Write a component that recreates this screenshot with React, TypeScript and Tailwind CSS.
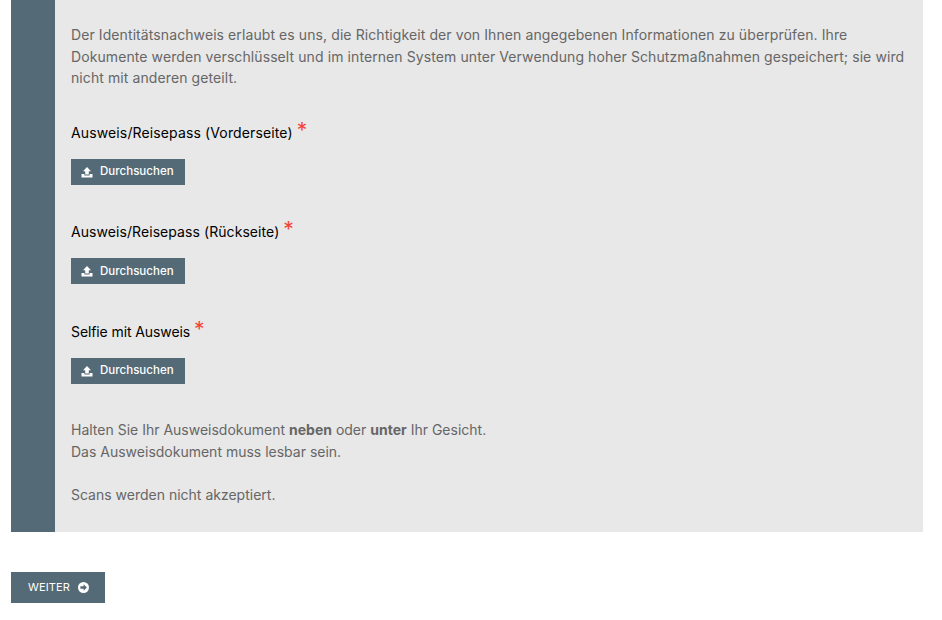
const font = { fontFamily: "Inter, 'Noto Sans', sans-serif" };

function UploadIcon() {
  return (
    <svg width="12" height="11" viewBox="0 0 12 11" className="shrink-0" aria-hidden>
      <path d="M6 0 L10 4.2 H7.8 V7.5 H4.2 V4.2 H2 Z" fill="#fff" />
      <path d="M0.5 7 H3.4 V8.4 H8.6 V7 H11.5 V10.5 H0.5 Z" fill="#fff" />
    </svg>
  );
}

function ArrowCircleIcon() {
  return (
    <svg width="11" height="11" viewBox="0 0 11 11" className="shrink-0" aria-hidden>
      <circle cx="5.5" cy="5.5" r="5.5" fill="#fff" />
      <path d="M5.6 2.2 L8.9 5.5 L5.6 8.8 V6.7 H2.4 V4.3 H5.6 Z" fill="#546a76" />
    </svg>
  );
}

function UploadField({ label, className, labelClass }: { label: string; className: string; labelClass: string }) {
  return (
    <div className={className}>
      <div className="flex h-[28px] items-start">
        <span className={`mt-[5px] text-[14px] leading-[21px] text-black ${labelClass}`}>{label}</span>
        <span className="ml-[4px] mt-[2px] text-[21px] leading-[24px] text-[#f44336]">*</span>
      </div>
      <button
        type="button"
        className="mt-[14px] flex h-[26px] w-[114px] items-center gap-[7px] bg-[#546a76] pl-[10px] pt-px text-[11.5px] font-medium tracking-[0.03px] text-white"
      >
        <UploadIcon />
        Durchsuchen
      </button>
    </div>
  );
}

export default function App() {
  return (
    <div className="h-[620px] w-[942px] overflow-hidden bg-white px-[11px]" style={font}>
      <div className="flex h-[532px] w-[912px] bg-[#e8e8e8]">
        <div className="w-[44px] bg-[#546a76]" />
        <div className="flex-1 pl-[16px] pr-[12px] pt-[24px] text-[14px] leading-[21.6px] text-[#666]">
          <p className="tracking-[0.09px]">
            Der Identitätsnachweis erlaubt es uns, die Richtigkeit der von Ihnen angegebenen Informationen zu
            überprüfen. Ihre Dokumente werden verschlüsselt und im internen System unter Verwendung hoher
            Schutzmaßnahmen gespeichert; sie wird nicht mit anderen geteilt.
          </p>
          <UploadField label="Ausweis/Reisepass (Vorderseite)" labelClass="tracking-[0.13px]" className="mt-[28px]" />
          <UploadField label="Ausweis/Reisepass (Rückseite)" labelClass="tracking-[0.07px]" className="mt-[31.5px]" />
          <UploadField label="Selfie mit Ausweis" labelClass="tracking-[-0.1px]" className="mt-[31.5px]" />
          <p className="mt-[35px]">
            Halten Sie Ihr Ausweisdokument <b>neben</b> oder <b>unter</b> Ihr Gesicht.
          </p>
          <p className="mt-[0.6px]">Das Ausweisdokument muss lesbar sein.</p>
          <p className="mt-[21.4px]">Scans werden nicht akzeptiert.</p>
        </div>
      </div>
      <button
        type="button"
        className="mt-[40px] flex h-[31px] w-[94px] items-center justify-center gap-[8px] bg-[#546a76] pl-px text-[11px] tracking-[0.1px] text-white"
      >
        WEITER
        <ArrowCircleIcon />
      </button>
    </div>
  );
}
